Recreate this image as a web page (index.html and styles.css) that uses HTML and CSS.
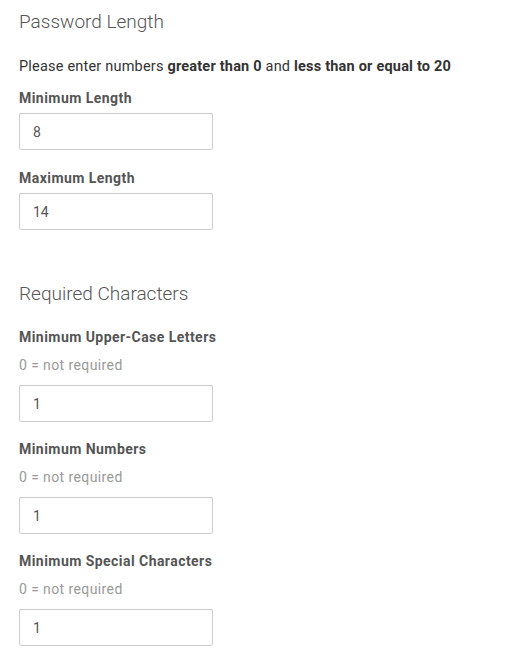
FILE: index.html
```html
<!DOCTYPE html>
<html>
<head>
<meta charset="utf-8">
<link rel="stylesheet" href="styles.css">
</head>
<body>
<div class="page">
  <section class="section">
    <h2 class="title">Password Length</h2>
    <p class="intro">Please enter numbers <b>greater than 0</b> and <b>less than or equal to 20</b></p>
    <div class="field">
      <label class="label">Minimum Length</label>
      <input class="input" type="text" value="8">
    </div>
    <div class="field">
      <label class="label">Maximum Length</label>
      <input class="input" type="text" value="14">
    </div>
  </section>
  <section class="section second">
    <h2 class="title">Required Characters</h2>
    <div class="field">
      <label class="label">Minimum Upper-Case Letters</label>
      <div class="hint">0 = not required</div>
      <input class="input" type="text" value="1">
    </div>
    <div class="field">
      <label class="label">Minimum Numbers</label>
      <div class="hint">0 = not required</div>
      <input class="input" type="text" value="1">
    </div>
    <div class="field">
      <label class="label">Minimum Special Characters</label>
      <div class="hint">0 = not required</div>
      <input class="input" type="text" value="1">
    </div>
  </section>
</div>
</body>
</html>
```
FILE: styles.css
```css
html, body { margin: 0; padding: 0; background: #fff; }
body { font-family: Roboto, "Liberation Sans", sans-serif; color: #333; }
.page { padding: 0 19px; }
.section { display: flex; flex-direction: column; }
.title {
  margin: 0;
  font-weight: 300;
  font-size: 19px;
  line-height: 24px;
  padding-top: 10px;
  color: #555;
}
.intro {
  margin: 23px 0 0;
  font-size: 14.5px;
  line-height: 20px;
  color: #333;
  letter-spacing: 0.2px;
}
.intro b { font-weight: 700; }
.field { display: flex; flex-direction: column; align-items: flex-start; }
.label {
  font-size: 14px;
  font-weight: 700;
  color: #555;
  line-height: 20px;
  letter-spacing: 0.45px;
  margin: 18px 0 5px;
}
.intro + .field .label { margin-top: 11px; }
.hint {
  font-size: 14px;
  color: #999;
  line-height: 20px;
  letter-spacing: 0.4px;
  margin: 8px 0 10px;
}
.input {
  box-sizing: border-box;
  width: 194px;
  height: 37px;
  border: 1px solid #ccc;
  border-radius: 2px;
  padding: 0 13px;
  font-family: Roboto, "Liberation Sans", sans-serif;
  font-size: 14px;
  color: #555;
  outline: none;
  margin: 0;
  background: #fff;
}
.second { margin-top: 52px; }
.second .title { padding-top: 0; }
.second .label { margin: 17px 0 0; }
.second .title + .field .label { margin-top: 21px; }
```
